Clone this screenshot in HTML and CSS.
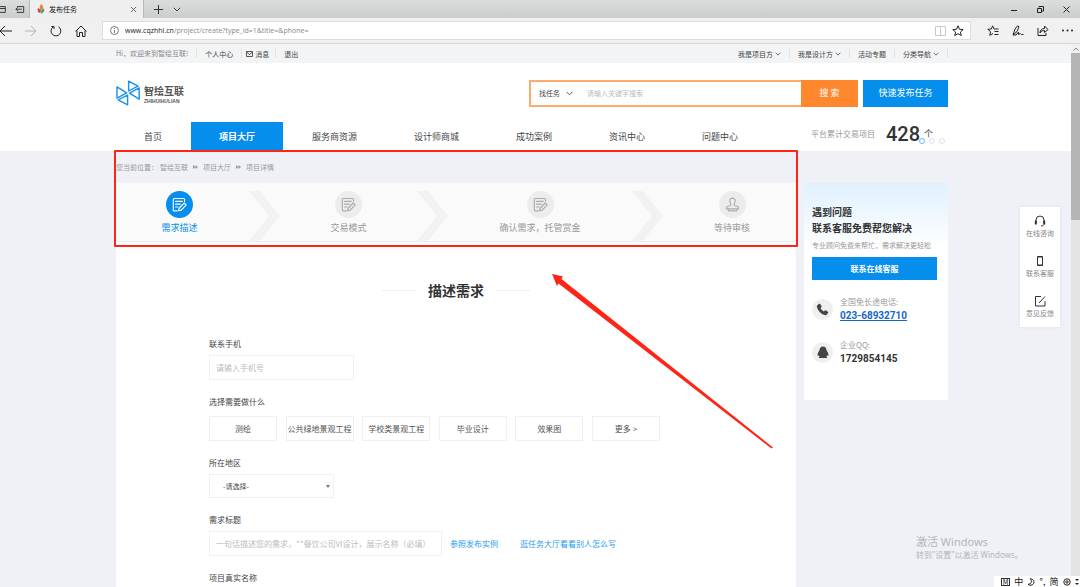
FILE: index.html
```html
<!DOCTYPE html>
<html lang="zh-CN">
<head>
<meta charset="utf-8">
<title>发布任务</title>
<link rel="stylesheet" href="styles.css">
</head>
<body>
<svg class="defs" aria-hidden="true">
  <symbol id="doc" viewBox="0 0 16 16"><g fill="none" stroke="currentColor" stroke-width="1.2" stroke-linejoin="round" stroke-linecap="round"><path d="M13.4 4.600V2.6a1 1 0 0 0-1-1H2.4a1 1 0 0 0-1 1v11.2a1 1 0 0 0 1 1H5.6M3.8 4.6h7.2M3.8 7.6h5M3.8 10.6h2.6"/><path d="M7.6 12l5.400-5.600 2.2 2-5.400 5.600-2.8.6z"/></g></symbol>
  <symbol id="stamp" viewBox="0 0 16 16"><g fill="none" stroke="currentColor" stroke-width="1.2" stroke-linejoin="round" stroke-linecap="round"><path d="M8 1.2a3 3 0 0 0-2.6 4.4C6.6 7.600 6.800 8.800 5.200 9.400L2.600 10.200a1.600 1.600 0 0 0-1 1.500v1h12.800v-1a1.600 1.600 0 0 0-1-1.500L10.800 9.400C9.200 8.800 9.400 7.600 10.600 5.600A3 3 0 0 0 8 1.200zM3.200 12.800l.6 2h8.400l.6-2"/></g></symbol>
  <symbol id="down" viewBox="0 0 8 5"><path d="M.8.8L4 4 7.200.8" fill="none" stroke="currentColor"/></symbol>
</svg>

<div class="tabs">
  <svg class="tab-tool" viewBox="0 0 30 18" fill="none" stroke="#333"><path d="M0 6.500H5.500V12.500H0M0 8.500H5.500M16.500 9.200h6M18.500 7.200l-2 2 2 2M17.500 6.500h7v6h-7"/></svg>
  <div class="tab">
    <svg class="favicon" viewBox="0 0 8 10"><path d="M4 0C6 1 6.500 3 6 5L3 6C2 4 3 2 4 0z" fill="#f08040"/><path d="M1 4l3 2-1 3C1 9 0 6 1 4z" fill="#d9483b"/><path d="M4 6l3-1.500C8 7 6 9.500 3.500 9.500z" fill="#4aa07a"/></svg>
    <span class="tab-name">发布任务</span>
    <button class="ghost" aria-label="关闭标签页"><svg viewBox="0 0 8 8" width="7" height="7"><path d="M1 1l6 6M7 1L1 7" stroke="#555" fill="none"/></svg></button>
  </div>
  <button class="ghost" aria-label="新建标签页"><svg viewBox="0 0 9 9" width="9" height="9"><path d="M4.500 0v9M0 4.500h9" stroke="#333"/></svg></button>
  <button class="ghost" aria-label="标签页列表"><svg width="8" height="5"><use href="#down"/></svg></button>
  <div class="win">
    <button class="ghost" aria-label="最小化"><svg width="7" height="7"><path d="M0 4.500h6" stroke="#222"/></svg></button>
    <button class="ghost" aria-label="还原"><svg width="7" height="7" fill="none" stroke="#222"><path d="M.5 2.500h4v4h-4zM2 1.500V.5h4.500V5H5"/></svg></button>
    <button class="ghost" aria-label="关闭"><svg width="7" height="7"><path d="M.5.5l6 6M6.500.5l-6 6" stroke="#222"/></svg></button>
  </div>
</div>

<div class="toolbar">
  <div class="nav-tools">
    <button class="ghost" aria-label="后退"><svg width="12" height="12" fill="none" stroke="#222"><path d="M0 6h12M5 1L0 6l5 5"/></svg></button>
    <button class="ghost" aria-label="前进"><svg width="12" height="12" fill="none" stroke="#b5b5b5"><path d="M0 6h11M6 1l5 5-5 5"/></svg></button>
    <button class="ghost" aria-label="刷新"><svg width="12" height="12" fill="none" stroke="#222"><path d="M8.500 1.800A4.900 4.900 0 1 1 3.200 1.900M1.500 1.500h2.500v2.500"/></svg></button>
    <button class="ghost" aria-label="主页"><svg width="12" height="12" fill="none" stroke="#222"><path d="M.5 6.500L6 1l5.500 5.500M2 5.500v6h2.500V7.500h3v4H10v-6"/></svg></button>
  </div>
  <div class="address">
    <svg width="9" height="9" fill="none" stroke="#777"><circle cx="4.500" cy="4.500" r="4"/><path d="M4.500 4v3M4.500 2v1"/></svg>
    <span class="url"><b>www.cqzhhl.cn</b>/project/create?type_id=1&amp;title=&amp;phone=</span>
    <svg width="11" height="10" fill="none" stroke="#c8c8c8"><path d="M.5.5h10v9H.5zM5.500.5v9"/></svg>
    <svg width="12" height="11" fill="none" stroke="#222"><path d="M6 .8l1.500 3.500 3.700.3-2.800 2.400.9 3.600L6 8.700l-3.300 1.900.9-3.600L.8 4.600l3.700-.3z"/></svg>
  </div>
  <div class="page-tools">
    <button class="ghost" aria-label="收藏夹"><svg width="12" height="11" fill="none" stroke="#222"><path d="M6 8.500L2.800 10.300l.8-3.600L.8 4.300l3.500-.3L5.600.8 7 4h4.500M7.500 6.500h4M7.500 9.500h4"/></svg></button>
    <button class="ghost" aria-label="笔记"><svg width="12" height="11" fill="none" stroke="#222"><path d="M1 10L3 4 5.500.8l1.500 1L5 6.500 1 10h3l2.500-3v2.500l2-1 1 1h2"/></svg></button>
    <button class="ghost" aria-label="共享"><svg width="12" height="11" fill="none" stroke="#222"><path d="M1 3v7.500h8V8M3 8c0-3 2-4.500 4.500-4.500V1L11 4.500 7.500 7.500V5.500C5.500 5.500 4 6 3 8z"/></svg></button>
    <button class="ghost" aria-label="更多"><svg width="11" height="3" fill="#222"><circle cx="1" cy="1.500" r="1"/><circle cx="5.500" cy="1.500" r="1"/><circle cx="10" cy="1.500" r="1"/></svg></button>
  </div>
</div>

<div class="viewport">
  <div class="page">
    <div class="topbar"><div class="wrap topbar-row">
      <span class="hello">Hi，欢迎来到智绘互联!</span>
      <a href="#">个人中心</a>
      <a href="#" class="msg"><svg width="7" height="6" fill="none" stroke="#555"><path d="M.5.5h6v5h-6zM.5 1l3 2.500L6.500 1"/></svg>消息</a>
      <a href="#">退出</a>
      <div class="topbar-right">
        <a href="#">我是项目方<svg width="6" height="4"><use href="#down"/></svg></a>
        <a href="#">我是设计方<svg width="6" height="4"><use href="#down"/></svg></a>
        <a href="#">活动专题</a>
        <a href="#">分类导航<svg width="6" height="4"><use href="#down"/></svg></a>
      </div>
    </div></div>

    <header class="header"><div class="wrap">
      <div class="brand-row">
        <a class="logo" href="#" aria-label="智绘互联">
          <svg width="24" height="26" viewBox="0 0 24 26" fill="none" stroke="#1592f2" stroke-width="1.400" stroke-linejoin="round"><path d="M12.600 11V1.200L22 6.200zM23.200 7.800v11.400L13.500 13.200zM11.600 15v9.800L2.200 19.800zM1 6.800v11.400L10.700 12.800z"/></svg>
          <span class="logo-text"><b>智绘互联</b><small>ZHIHUIHULIAN</small></span>
        </a>
        <form class="search">
          <button type="button" class="kind">找任务<svg width="7" height="5"><use href="#down"/></svg></button>
          <input type="text" aria-label="关键字" placeholder="请输入关键字搜索">
          <button type="button" class="go">搜 索</button>
        </form>
        <button class="publish">快速发布任务</button>
      </div>
      <div class="menu-row">
        <nav class="menu">
          <a href="#">首页</a><a href="#" class="on">项目大厅</a><a href="#">服务商资源</a><a href="#">设计师商城</a><a href="#">成功案例</a><a href="#">资讯中心</a><a href="#">问题中心</a>
        </nav>
        <div class="stat">平台累计交易项目<strong>428</strong><span class="unit">个</span><span class="dots"><i class="cur"></i><i></i><i></i></span></div>
      </div>
    </div></header>

    <div class="wrap content">
      <main class="main">
        <section class="intro">
          <div class="crumbs"><span>您当前位置：</span><a href="#">智绘互联</a><svg width="5" height="4"><path d="M0 0l2.500 2L0 4zM2.500 0L5 2 2.500 4z" fill="#999"/></svg><a href="#">项目大厅</a><svg width="5" height="4"><path d="M0 0l2.500 2L0 4zM2.500 0L5 2 2.500 4z" fill="#999"/></svg><a href="#">项目详情</a></div>
          <div class="steps">
            <div class="step active"><span class="disc"><svg width="15" height="15"><use href="#doc"/></svg></span>需求描述</div>
            <svg class="sep" viewBox="0 0 31 50"><path d="M0 0h11l20 25-20 25H0l20-25z"/></svg>
            <div class="step"><span class="disc"><svg width="15" height="15"><use href="#doc"/></svg></span>交易模式</div>
            <svg class="sep" viewBox="0 0 31 50"><path d="M0 0h11l20 25-20 25H0l20-25z"/></svg>
            <div class="step"><span class="disc"><svg width="15" height="15"><use href="#doc"/></svg></span>确认需求，托管赏金</div>
            <svg class="sep" viewBox="0 0 31 50"><path d="M0 0h11l20 25-20 25H0l20-25z"/></svg>
            <div class="step"><span class="disc"><svg width="15" height="15"><use href="#stamp"/></svg></span>等待审核</div>
          </div>
          <div class="mark-box"></div>
        </section>
        <section class="panel">
          <h1>描述需求</h1>
          <form class="form">
            <div class="field"><label for="tel">联系手机</label><input id="tel" type="text" class="tel" placeholder="请输入手机号"></div>
            <div class="field kinds"><span class="label">选择需要做什么</span>
              <div class="chips"><button type="button">测绘</button><button type="button">公共绿地景观工程</button><button type="button">学校类景观工程</button><button type="button">毕业设计</button><button type="button">效果图</button><button type="button">更多 &gt;</button></div>
            </div>
            <div class="field"><label for="area">所在地区</label>
              <div class="select"><select id="area"><option>-请选择-</option></select></div></div>
            <div class="field"><label for="title">需求标题</label>
              <div class="title-row"><input id="title" type="text" placeholder="一句话描述您的需求，**餐饮公司VI设计，展示名称（必填）"><a href="#">参照发布实例</a><a href="#">逛任务大厅看看别人怎么写</a></div></div>
            <div class="field"><label for="name">项目真实名称</label><input id="name" type="text" class="tel"></div>
          </form>
        </section>
        <svg class="mark-arrow" viewBox="0 0 222 176"><path d="M0 0L11 2.500 9.500 5 221 173.500 219.500 174.500 6.500 9.500 5 12z" fill="#ff2416"/></svg>
      </main>

      <aside class="help">
        <h2>遇到问题<br>联系客服免费帮您解决</h2>
        <p class="sub">专业顾问免费来帮忙，需求解决更轻松</p>
        <button class="chat">联系在线客服</button>
        <div class="contact">
          <span class="round"><svg width="13" height="13" viewBox="0 0 13 13"><path d="M1.200 2.500L3 .8c.4-.3.900-.2 1.200.2l1.300 2c.2.400.1.900-.2 1.200l-.8.7c.7 1.500 1.900 2.700 3.500 3.500l.8-.8c.3-.3.800-.4 1.200-.1l1.900 1.300c.4.300.5.800.2 1.200l-1.600 1.700c-.5.500-1.200.7-1.900.4C5 10.800 2.200 8 1 4.400.7 3.700.7 3 1.200 2.500z" fill="#444"/></svg></span>
          <div>全国免长途电话:<a href="#">023-68932710</a></div>
        </div>
        <div class="contact">
          <span class="round"><svg width="12" height="13" viewBox="0 0 12 13"><path d="M6 .5c2.400 0 3.600 1.700 3.600 4 .9 1.300 1.900 3 1.900 4.600 0 .9-.5 1-1.300.1-.2.600-.5 1.100-.9 1.500.8.400 1 .8.700 1.400H6.500 5.500 2c-.3-.600-.1-1 .7-1.400-.4-.4-.7-.9-.9-1.500-.8.900-1.300.8-1.300-.1 0-1.600 1-3.300 1.900-4.600C2.400 2.200 3.600.5 6 .5z" fill="#444"/></svg></span>
          <div>企业QQ:<strong>1729854145</strong></div>
        </div>
      </aside>
    </div>

    <div class="float">
      <a href="#"><svg width="12" height="12" fill="none" stroke="#333"><path d="M2 8V5a4 4 0 0 1 8 0v3M10 9.500C9.500 10.500 8.500 11 7 11"/><path d="M1.800 5.500v4M10.200 5.500v4" stroke-width="2"/></svg>在线咨询</a>
      <a href="#"><svg width="12" height="12" fill="none" stroke="#333"><path d="M3.500 1.500h5v9h-5z"/><path d="M3.500 2h5M3.500 10h5"/></svg>联系客服</a>
      <a href="#"><svg width="12" height="12" fill="none" stroke="#333"><path d="M7 1.500H1.500v9.500h9.500V6M5 8L11 1.500"/></svg>意见反馈</a>
    </div>
  </div>
  <div class="scroll"><div class="up"><svg width="6" height="4" viewBox="0 0 6 4"><path d="M.5 3.500L3 1l2.500 2.500" fill="none" stroke="#888"/></svg></div><div class="thumb"></div></div>
</div>

<div class="watermark"><b>激活 Windows</b>转到"设置"以激活 Windows。</div>
<div class="ime"><span class="m">M</span><span>中</span><svg width="8" height="8"><path d="M3 .8c2.500 2 2 5-2 5.500 2.500 2 6 .5 6-2.500C7 2 5 .8 3 .8z" fill="none" stroke="#222"/></svg><span>°,</span><span>简</span><svg width="8" height="8" fill="none" stroke="#222"><circle cx="4" cy="4" r="3.200"/><circle cx="4" cy="4" r="1.200"/></svg><svg width="4" height="8" fill="#222"><path d="M0 1h4L2 3zM0 5h4L2 7z"/></svg></div>
</body>
</html>
```

FILE: styles.css
```css
* { box-sizing: border-box; }

body {
  position: relative;
  display: flex;
  flex-direction: column;
  height: 100vh;
  margin: 0;
  overflow: hidden;
  background: #eff1f6;
  color: #444;
  font: 8px/12px "Noto Sans CJK SC", sans-serif;
}

a { color: inherit; text-decoration: none; }
button, input, select { margin: 0; padding: 0; font: inherit; color: inherit; border: 0; border-radius: 0; background: none; }
input::placeholder { color: #bbb; opacity: 1; }
svg { flex: none; }
.defs { position: absolute; width: 0; height: 0; }
.ghost { display: flex; align-items: center; justify-content: center; }

/* browser frame */
.tabs {
  flex: none;
  display: flex;
  align-items: center;
  height: 18px;
  gap: 10px;
  background: linear-gradient(#dcdedd, #cbcdcc);
}
.tab-tool { width: 29px; height: 18px; margin-right: -10px; }
.tab {
  display: flex;
  align-items: center;
  width: 115px;
  height: 18px;
  padding: 0 6px 0 7px;
  background: #eeefee;
  border: solid #b8b8b8;
  border-width: 0 1px;
}
.favicon { width: 8px; height: 10px; }
.tab-name { flex: 1; padding-left: 4px; color: #111; font-size: 7px; }
.win { display: flex; gap: 19px; margin-left: auto; padding-right: 10px; }

.toolbar {
  flex: none;
  display: flex;
  align-items: center;
  height: 26px;
  background: #f0f0f0;
  border-bottom: 1px solid #d4d6d8;
}
.nav-tools { display: flex; gap: 13px; width: 102px; }
.address {
  flex: 1;
  display: flex;
  align-items: center;
  gap: 6px;
  height: 19px;
  padding: 0 6px 0 7px;
  background: #fff;
  border: 1px solid #ddd;
}
.url { flex: 1; color: #888; font: 7px/12px "Open Sans", sans-serif; }
.url b { color: #222; font-weight: 400; }
.page-tools { display: flex; align-items: center; gap: 13px; padding: 0 7px 0 16px; }

.viewport { flex: 1; display: flex; min-height: 0; }
.page { flex: 1; position: relative; display: flex; flex-direction: column; min-width: 0; overflow: hidden; }
.scroll { width: 9px; background: #e4e4e4; }
.up { display: flex; align-items: center; justify-content: center; height: 9px; background: #f0f0f0; }
.thumb { height: 167px; background: #b5b5b5; }

.wrap { width: 832px; max-width: 100%; margin: 0 auto; }
.topbar, .header { padding-right: 7px; }

/* top links */
.topbar { flex: none; background: #f3f4f6; font-size: 7px; }
.topbar-row, .topbar-right { display: flex; align-items: center; }
.topbar-row { height: 19px; }
.topbar a { display: flex; align-items: center; gap: 2px; height: 9px; padding: 0 8px; border-right: 1px solid #e2e2e2; }
.topbar .msg { padding: 0 6px 0 4px; }
.topbar .msg + a { border: 0; }
.hello { height: 9px; line-height: 9px; padding-right: 8px; color: #888; border-right: 1px solid #e2e2e2; }
.topbar-right { margin-left: auto; }

/* header */
.header { flex: none; background: #fff; }
.brand-row { display: flex; align-items: center; height: 59px; padding-top: 1px; }
.logo { display: flex; align-items: center; gap: 4px; }
.logo-text { display: flex; flex-direction: column; color: #555; }
.logo-text b { font-size: 10px; line-height: 15px; }
.logo-text small { font: 700 5px/6px "Liberation Sans", sans-serif; }
.search { display: flex; width: 329px; height: 27px; margin-left: auto; border: 2px solid #ffab70; border-right: 0; }
.kind { display: flex; align-items: center; gap: 6px; width: 56px; padding-left: 8px; font-size: 7px; }
.search input { flex: 1; min-width: 0; font-size: 7px; }
.go { width: 57px; margin: -2px 0; background: #ff882f; color: #fff; font-size: 9px; }
.publish { width: 85px; height: 27px; margin-left: 5px; background: #058eec; color: #fff; font-size: 9px; }
.menu-row { display: flex; justify-content: space-between; height: 29px; }
.menu { display: flex; gap: 1px; }
.menu a { padding: 0 28px; font-size: 9px; line-height: 30px; white-space: nowrap; }
.menu .on { background: #058eec; color: #fff; font-weight: 700; }
.stat { position: relative; display: flex; align-items: center; width: 137px; height: 24px; color: #999; white-space: nowrap; }
.stat strong { margin-left: 11px; color: #333; font: 500 20px/24px Roboto, sans-serif; }
.unit { padding-left: 4px; color: #444; font-size: 9px; }
.dots { position: absolute; right: 3px; bottom: 2px; display: flex; gap: 4px; }
.dots i { width: 6px; height: 6px; border: 1px solid #e2e2e2; border-radius: 50%; }
.dots .cur { border-color: #6bbcf5; }

/* content */
.content { flex: 1; display: flex; align-items: flex-start; gap: 8px; width: 839px; min-height: 0; padding-right: 7px; }
.main { position: relative; flex: 1; align-self: stretch; min-width: 0; display: flex; flex-direction: column; }
.intro { position: relative; flex: none; }
.crumbs { display: flex; align-items: center; gap: 5px; height: 32px; color: #999; font-size: 7px; }
.crumbs span { margin-right: -3px; }
.steps {
  display: grid;
  grid-template-columns: 133fr 31px 137fr 31px 184fr 31px 133fr;
  align-items: start;
  height: 59px;
  padding-top: 8px;
  background: #fafafa;
  border-bottom: 1px solid #eee;
}
.step { display: flex; flex-direction: column; align-items: center; gap: 4px; color: #999; font-size: 9px; }
.step.active { padding-right: 6px; color: #058eec; }
.step:last-child { padding-left: 5px; }
.disc { display: flex; align-items: center; justify-content: center; width: 27px; height: 27px; border-radius: 50%; background: #ececec; color: #aaa; }
.active .disc { background: #058eec; color: #fff; }
.sep { width: 31px; height: 50px; fill: #f2f2f2; }
.mark-box { position: absolute; inset: -1px -2px -5px; border: 2px solid #ff2416; border-radius: 1px; pointer-events: none; }
.mark-arrow { position: absolute; left: 436px; top: 123px; width: 222px; height: 176px; pointer-events: none; }

.panel { flex: 1 0 auto; background: #fff; padding: 38px 93px; }
h1 { display: flex; align-items: center; justify-content: center; gap: 11px; margin: 0 0 37px; color: #333; font-size: 14px; line-height: 21px; }
h1::before, h1::after { content: ""; width: 35px; height: 1px; background: #f1f1f1; }
.form { display: flex; flex-direction: column; gap: 16px; }
.field { display: flex; flex-direction: column; align-items: flex-start; gap: 5px; }
.kinds { gap: 8px; }
.form input, .chips button, .select { height: 25px; border: 1px solid #f0f0f0; }
.form input { padding: 0 6px; }
.tel { width: 145px; }
.chips { display: flex; justify-content: space-between; width: 451px; }
.chips button { width: 68px; color: #555; white-space: nowrap; }
.form .select { position: relative; width: 125px; height: 24px; }
.select select { width: 100%; height: 100%; padding-left: 13px; font-size: 7px; appearance: none; }
.select::after { content: ""; position: absolute; right: 3px; top: 10px; border: solid transparent; border-width: 3px 2px 0; border-top-color: #777; }
.title-row { display: flex; align-items: center; color: #2a9af0; }
.title-row input { width: 233px; margin-right: 8px; color: #444; }
.title-row a + a { margin-left: 22px; }

/* help card */
.help { width: 144px; height: 217px; margin-top: 32px; padding: 21px 11px 0 8px; background: linear-gradient(#e0f1fd, #fff 67px); }
h2 { margin: 0; color: #333; font-size: 10px; line-height: 16px; }
.sub { margin: 3px 0 6px; color: #999; font-size: 7px; white-space: nowrap; }
.chat { width: 100%; height: 23px; background: #058eec; color: #fff; font-weight: 700; }
.contact { display: flex; align-items: center; gap: 7px; margin-top: 15px; color: #999; line-height: 14px; }
.round { display: flex; align-items: center; justify-content: center; width: 21px; height: 21px; border-radius: 50%; background: #efefef; }
.contact a, .contact strong { display: block; font: 700 10px/14px Roboto, sans-serif; }
.contact a { color: #1668c7; text-decoration: underline; }
.contact strong { color: #333; }

/* floating tools */
.float {
  position: absolute;
  right: 11px;
  top: 163px;
  display: flex;
  flex-direction: column;
  gap: 16px;
  width: 40px;
  padding: 8px 0;
  background: #fff;
  box-shadow: 0 0 3px #dde;
  color: #888;
  font-size: 7px;
}
.float a { display: flex; flex-direction: column; align-items: center; }

.watermark { position: absolute; left: 916px; top: 534px; color: #b3b5b9; font: 8px/12px "Noto Sans", "Noto Sans CJK SC", sans-serif; }
.watermark b { display: block; font-size: 11px; line-height: 15px; font-weight: 400; }
.ime { position: absolute; right: 0; bottom: 0; display: flex; align-items: center; justify-content: space-between; width: 86px; height: 11px; padding: 0 1px 0 7px; background: #fff; color: #111; font-size: 9px; line-height: 10px; }
.ime .m { width: 9px; height: 8px; border: 1px solid #333; font-size: 7px; line-height: 6px; text-align: center; }
```
